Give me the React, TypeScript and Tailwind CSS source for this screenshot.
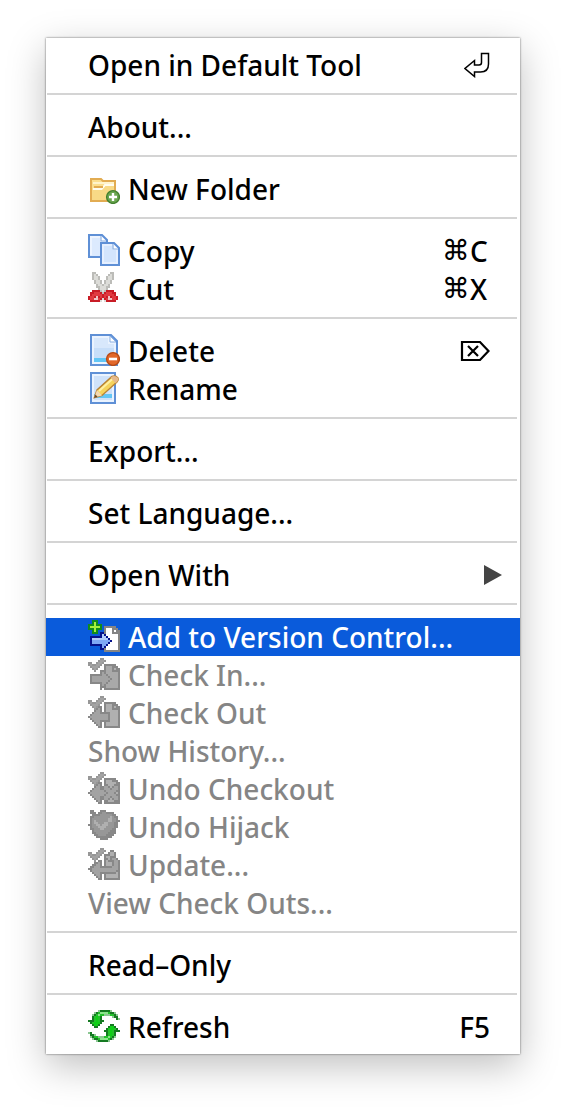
import type { ReactNode } from 'react';

type Palette = Record<string, string>;

const PALETTE: Palette = {
  G: '#108c1c',
  L: '#a6f03c',
  N: '#06128c',
  B: '#7fa8f5',
  b: '#b4ccfb',
  P: '#858585',
  W: '#ffffff',
  c: '#979797',
  C: '#a3a3a3',
  d: '#888888',
  e: '#a9a9a9',
  h: '#b0b0b0',
  s: '#bcbcb8',
  w: '#dcdcd8',
  q: '#f0c4c4',
  r: '#c81c26',
  R: '#e03a40',
  g: '#157a22',
  l: '#8be58b',
  m: '#22c32a',
  n: '#10cf18',
  t: '#8cc793',
};

function Pixels({ rows }: { rows: string[] }) {
  return (
    <g shapeRendering="crispEdges">
      {rows.flatMap((row, y) =>
        row.split('').map((key, x) =>
          PALETTE[key] ? (
            <rect key={`${x}-${y}`} x={x} y={y} width="1" height="1" fill={PALETTE[key]} />
          ) : null,
        ),
      )}
    </g>
  );
}

function Icon({ children }: { children: ReactNode }) {
  return (
    <svg viewBox="0 0 16 16" className="mb-[2px] size-8 shrink-0" aria-hidden="true">
      {children}
    </svg>
  );
}

const ADD = [
  '..GGG...........',
  '..GLG...........',
  'GGGLGGG.........',
  'GLLLLLG.PPPPPP..',
  'GGGLGGG.PWWWPPP.',
  '..GLG...PWWWPWPP',
  '..GGG.NNPWWWPPPP',
  '......NbNWWWWWWP',
  '.NNNNNNbbNWWWWWP',
  '.NbbbbbbbbNWWWWP',
  '.NBBBBBBBBBNWWWP',
  '.NBBBBBBBBNWWWWP',
  '.NNNNNNBBNWWWWWP',
  '......NBNWWWWWWP',
  '......NNPWWWWWWP',
  '........PPPPPPPP',
];

const CHECK_IN = [
  '......cc........',
  '.....cCCc.......',
  'cc..cCCc........',
  'cCccCCc.dddddd..',
  '.cCCCc..deeeddd.',
  '..cCc...deeedhdd',
  '...c..dddeeedddd',
  '......dCdeeeeeed',
  '.ddddddCCdeeeeed',
  '.dCCCCCCCCdeeeed',
  '.dCCCCCCCCCdeeed',
  '.dCCCCCCCCdeeeed',
  '.ddddddCCdeeeeed',
  '......dCdeeeeeed',
  '......dddeeeeeed',
  '......d.dddddddd',
];

const CHECK_OUT = [
  '......cc........',
  '.....cCCc.......',
  'cc..cCCc........',
  'cCccCCc.dddddd..',
  '.cCCCc..dhhhddd.',
  '..cCcdd.dhhhdhdd',
  '...cdCd.dhhhdddd',
  '...dCCd.dhhhhhhd',
  '..dCCCdddddhhhhd',
  '.dCCCCCCCCdhhhhd',
  'dCCCCCCCCCdhhhhd',
  '.dCCCCCCCCdhhhhd',
  '..dCCCdddddhhhhd',
  '...dCCd.dhhhhhhd',
  '....dCd.dhhhhhhd',
  '.....dd.dddddddd',
];

const UNDO_CHECKOUT = [
  '......cc........',
  '.....cCCc.......',
  'cc..cCCc........',
  'cCccCCc.dddddd..',
  '.cCCCc..dhhhddd.',
  '..cCcdd.dhhhhhdd',
  '...cdCd.ddhhhddd',
  '...dCCddCCdhdCCd',
  '..dCCCddCCCdCCCd',
  '.dCCCCCCdCCCCCdd',
  'dCCCCCCCCdCCCdhd',
  '.dCCCCCCdCCCCCdd',
  '..dCCCddCCCdCCCd',
  '...dCCddCCdhdCCd',
  '....dCd.ddhhhddd',
  '.....dd.dddddddd',
];

const UNDO_HIJACK = [
  '.dd...ddd.......',
  '.ddd.ddccdddd...',
  '..ddddccccccdd..',
  '.ddcccccccchcdd.',
  '.dcccccccchhccd.',
  '.dchcccccchhccdd',
  '.dchhccchhcccdd.',
  'ddcchhchhhcccdd.',
  '.dccchhhhccccdd.',
  '.ddccchhccccdd..',
  '..dccccccccddd..',
  '..ddccccccdddd..',
  '...ddccccdddd...',
  '....dddddddd....',
  '......dddd......',
];

const UPDATE = [
  '......cc........',
  '.....cCCc..dd...',
  'cc..cCCc..dhhd..',
  'cCccCCc.dddhhd..',
  '.cCCCc..dhhddd..',
  '..cCc...ddhdCCd.',
  '...c.dd.dhdddCCd',
  '...ddCd.dhhhdCCd',
  '..ddCCd.dhhhdCCd',
  '.ddCCCddddddCCCd',
  'ddCCCCCCCCCCCCCd',
  '.dCCCCCCCCCCCCdd',
  '..dCCCddddddddhd',
  '...dCCd.dhhhhhhd',
  '....dCd.dhhhhhhd',
  '.....dd.dddddddd',
];

const SCISSORS = [
  '..ss.......ss...',
  '..sws.....sws...',
  '..swws...swws...',
  '..swws...swws...',
  '...swws.swws....',
  '...swws.swws....',
  '....swwswws.....',
  '....sswwwss.....',
  '.....swwws......',
  '..rrrrswsrrrr...',
  '.rrRRRrsrRRRrr..',
  '.rRRRRRrRRRRRr..',
  'rRRrqrRrRrqrRRr.',
  'rRRqqRrwrRqqRRr.',
  '.rrrrrw.wrrrrr..',
];

const ARROW = [
  '.....tgggggt....',
  '...tgmllllmggt..',
  '..tgmlmmtttmmgt.',
  '..gmnmg.....tgg.',
  '..gmnmg.......gt',
  'gggmnmgg........',
  '.gmnnng.........',
  '..gnng..........',
  '...gg...........',
];

function DocumentShape() {
  return (
    <>
      <path d="M1.5.5H11.5L14.5 3.5V15.5H1.5Z" fill="#d3e4fb" stroke="#5f90d6" />
      <path d="M2.5 1.5H10.5V4.5H13.5V14.5H2.5Z" fill="#d8e8fc" stroke="#eaf3ff" />
      <path d="M3 7H13V12H3Z" fill="#bfd9f8" opacity=".65" />
      <path d="M11 1V4H14Z" fill="#fff" stroke="#8bb0e2" strokeWidth=".5" />
    </>
  );
}

const icons = {
  folder: (
    <Icon>
      <path d="M1.5 14.5V3.5H6.5L7.5 4.5H13.5V14.5Z" fill="#fbdf90" stroke="#e2ac52" />
      <path d="M2.5 5.5H13" stroke="#fff4cc" />
      <path d="M2.5 8.5H7L8.5 6.5H13" fill="none" stroke="#fffdf0" />
      <path d="M2 9H7L9 7H13V14H2Z" fill="#f8da86" />
      <path d="M3 7.5H7.5" stroke="#e2ac52" />
      <circle cx="12.5" cy="12.5" r="3.2" fill="#6aa650" stroke="#43802f" strokeWidth=".7" />
      <path d="M12.5 10.5V14.5M10.5 12.5H14.5" stroke="#fff" strokeWidth="1.2" />
    </Icon>
  ),
  copy: (
    <Icon>
      <path d="M.5.5H7L9.5 3V11.5H.5Z" fill="#dceafe" stroke="#5f90d6" />
      <path d="M1.5 10.5V1.5H6.5V3.5H8.5" fill="none" stroke="#edf4ff" />
      <path d="M6.5 1V3.5H9" fill="#fff" stroke="#8bb0e2" strokeWidth=".6" />
      <path d="M6.5 4.5H13L15.5 7V15.5H6.5Z" fill="#d3e5fd" stroke="#5f90d6" />
      <path d="M7.5 14.5V5.5H12.5V7.5H14.5V14.5Z" fill="#d3e5fd" stroke="#e6f0ff" />
      <path d="M12.5 5V7.5H15" fill="#fff" stroke="#8bb0e2" strokeWidth=".6" />
    </Icon>
  ),
  cut: <Icon><Pixels rows={SCISSORS} /></Icon>,
  remove: (
    <Icon>
      <DocumentShape />
      <path d="M3 12H10V14H3Z" fill="#62c6f5" />
      <circle cx="12.5" cy="12.5" r="3.2" fill="#e2672a" stroke="#b64a17" strokeWidth=".7" />
      <path d="M10.5 12.5H14.5" stroke="#fff" strokeWidth="1.3" />
    </Icon>
  ),
  rename: (
    <Icon>
      <path d="M1.5.5H13.5V15.5H1.5Z" fill="#d3e4fb" stroke="#5f90d6" />
      <path d="M2.5 1.5H12.5V14.5H2.5Z" fill="#cfe2fa" stroke="#eaf3ff" />
      <path d="M3 11H12V13H3Z" fill="#62c6f5" />
      <path d="M3.2 12.8L4.5 9L12 2.2Q13.7 1.5 15 3Q15.5 4 14.5 5L7 11.7Z" fill="#f5d35c" stroke="#b98335" strokeWidth=".7" />
      <path d="M5.5 9.5L12.2 3.5" stroke="#fff0a3" strokeWidth="1" />
      <path d="M12 2.2Q13.7 1.5 15 3Q15.5 4 14.5 5L13.8 5.6L11.3 2.9Z" fill="#e6b98b" />
      <path d="M3.2 12.8L4.5 9L7 11.7Z" fill="#f4d9b0" />
      <path d="M3 13L3.7 11.2L4.8 12.4Z" fill="#6d4a2b" />
    </Icon>
  ),
  add: <Icon><Pixels rows={ADD} /></Icon>,
  checkIn: <Icon><Pixels rows={CHECK_IN} /></Icon>,
  checkOut: <Icon><Pixels rows={CHECK_OUT} /></Icon>,
  undoCheckout: <Icon><Pixels rows={UNDO_CHECKOUT} /></Icon>,
  undoHijack: <Icon><Pixels rows={UNDO_HIJACK} /></Icon>,
  update: <Icon><Pixels rows={UPDATE} /></Icon>,
  refresh: (
    <Icon>
      <Pixels rows={ARROW} />
      <g transform="rotate(180 8 8)"><Pixels rows={ARROW} /></g>
    </Icon>
  ),
};

function ReturnKey() {
  return (
    <svg viewBox="0 0 26 26" className="size-[26px]" fill="none" stroke="#000" strokeWidth="1.5" role="img" aria-label="Return">
      <path d="M17.5 1.5H24.5V12Q24.5 20 16.5 20H10.5V24.5L1 16.5L10.5 8.5V13H15Q17.5 13 17.5 10.5Z" />
    </svg>
  );
}

function DeleteKey() {
  return (
    <svg viewBox="0 0 30 22" className="h-[22px] w-[30px]" fill="none" stroke="#000" strokeWidth="2.2" role="img" aria-label="Forward delete">
      <path d="M2 2H20L28.5 11L20 20H2Z" />
      <path d="M8 6L18 16M18 6L8 16" />
    </svg>
  );
}

type Entry = {
  label: string;
  icon?: ReactNode;
  shortcut?: ReactNode;
  submenu?: boolean;
  active?: boolean;
  disabled?: boolean;
};

const command = (key: string) => (
  <>
    <span className="font-['DejaVu_Sans',sans-serif]">⌘</span>
    <span className="w-5">{key}</span>
  </>
);

const groups: Entry[][] = [
  [{ label: 'Open in Default Tool', shortcut: <ReturnKey /> }],
  [{ label: 'About...' }],
  [{ label: 'New Folder', icon: icons.folder }],
  [
    { label: 'Copy', icon: icons.copy, shortcut: command('C') },
    { label: 'Cut', icon: icons.cut, shortcut: command('X') },
  ],
  [
    { label: 'Delete', icon: icons.remove, shortcut: <DeleteKey /> },
    { label: 'Rename', icon: icons.rename },
  ],
  [{ label: 'Export...' }],
  [{ label: 'Set Language...' }],
  [{ label: 'Open With', submenu: true }],
  [
    { label: 'Add to Version Control...', icon: icons.add, active: true },
    { label: 'Check In...', icon: icons.checkIn, disabled: true },
    { label: 'Check Out', icon: icons.checkOut, disabled: true },
    { label: 'Show History...', disabled: true },
    { label: 'Undo Checkout', icon: icons.undoCheckout, disabled: true },
    { label: 'Undo Hijack', icon: icons.undoHijack, disabled: true },
    { label: 'Update...', icon: icons.update, disabled: true },
    { label: 'View Check Outs...', disabled: true },
  ],
  [{ label: 'Read–Only' }],
  [{ label: 'Refresh', icon: icons.refresh, shortcut: 'F5' }],
];

function MenuItem({ label, icon, shortcut, submenu, active, disabled }: Entry) {
  const tone = active ? 'bg-[#0a5bdb] text-white' : disabled ? 'text-[#858585]' : 'text-black';
  return (
    <button
      type="button"
      role="menuitem"
      disabled={disabled}
      aria-haspopup={submenu ? 'menu' : undefined}
      className={`flex h-[38px] w-full items-center gap-2 pl-[42px] text-left whitespace-nowrap ${submenu ? 'pr-[18px]' : 'pr-[30px]'} ${tone}`}
    >
      {icon}
      <span className="grow">{label}</span>
      {shortcut && <span className="flex items-center">{shortcut}</span>}
      {submenu && (
        <svg viewBox="0 0 18 20" className="h-5 w-[18px]" aria-hidden="true">
          <path d="M0 0L18 10L0 20Z" fill="#444" />
        </svg>
      )}
    </button>
  );
}

export default function App() {
  return (
    <main className="bg-white px-[46px] pt-[38px] pb-[54px] font-['Noto_Sans','Open_Sans',sans-serif] text-[28px] leading-[38px] font-medium">
      <div
        role="menu"
        aria-label="File actions"
        className="bg-white py-2 shadow-[0_0_2px_rgba(0,0,0,0.6),0_12px_36px_rgba(0,0,0,0.25)]"
      >
        {groups.map((group, index) => (
          <div key={group[0].label} role="group">
            {index > 0 && <hr className="mt-[9px] mr-[3px] mb-[13px] ml-px border-t-2 border-[#d4d4d4]" />}
            {group.map((entry) => (
              <MenuItem key={entry.label} {...entry} />
            ))}
          </div>
        ))}
      </div>
    </main>
  );
}
